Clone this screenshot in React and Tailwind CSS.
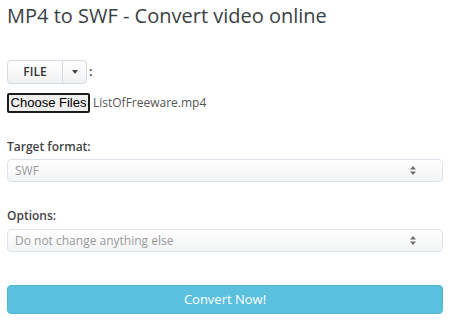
import React from 'react'

const SelectBox = ({ value }) => (
    <div className="flex items-center justify-between h-[23px] rounded-[4px] border border-[#dde3ea] bg-gradient-to-b from-white to-[#f3f4f5] pl-[7px] pr-[26px]">
        <span className="text-[12px] text-[#9a9a9a]">{value}</span>
        <svg width="6" height="9" viewBox="0 0 6 9" className="text-[#6b6b6b]">
            <path d="M3 0 L6 3.5 H0 Z" fill="currentColor" />
            <path d="M3 9 L6 5.5 H0 Z" fill="currentColor" />
        </svg>
    </div>
)

export default function App() {
    return (
        <div className="w-[450px] h-[331px] bg-white px-[7px] text-[#333]" style={{ fontFamily: '"Open Sans", sans-serif' }}>
            <h1 className="pt-[3px] text-[20px] leading-[26px] text-[#3a3f44]">MP4 to SWF - Convert video online</h1>

            {/* upload source */}
            <div className="mt-[31px] flex items-center">
                <div className="flex h-[24px] rounded-[4px] border border-[#d5dbe2] bg-gradient-to-b from-white to-[#f0f1f2]">
                    <div className="flex w-[55px] items-center justify-center border-r border-[#d5dbe2] text-[12px] font-semibold text-[#333]">FILE</div>
                    <div className="flex w-[23px] items-center justify-center">
                        <span className="border-x-[3px] border-t-[4px] border-x-transparent border-t-[#444]" />
                    </div>
                </div>
                <span className="ml-[2px] text-[13px] font-semibold text-[#333]">:</span>
            </div>

            <div className="mt-[9px] flex items-center">
                <div className="flex h-[20px] w-[83px] items-center justify-center rounded-[2px] border-2 border-[#1a1a1a] bg-[#efefef] text-[13px] text-black" style={{ fontFamily: '"Liberation Sans", Arial, sans-serif' }}>Choose Files</div>
                <span className="ml-[3px] text-[12px] text-[#555]">ListOfFreeware.mp4</span>
            </div>

            <div className="mt-[26px] text-[12px] font-semibold leading-[16px] text-[#444]">Target format:</div>
            <div className="mt-[4px]">
                <SelectBox value="SWF" />
            </div>

            <div className="mt-[26px] text-[12px] font-semibold leading-[16px] text-[#444]">Options:</div>
            <div className="mt-[5px]">
                <SelectBox value="Do not change anything else" />
            </div>

            <button className="mt-[33px] flex h-[29px] w-full items-center justify-center rounded-[4px] border border-[#4fb6d6] bg-[#5bc0de] text-[13px] text-white">
                Convert Now!
            </button>
        </div>
    )
}
